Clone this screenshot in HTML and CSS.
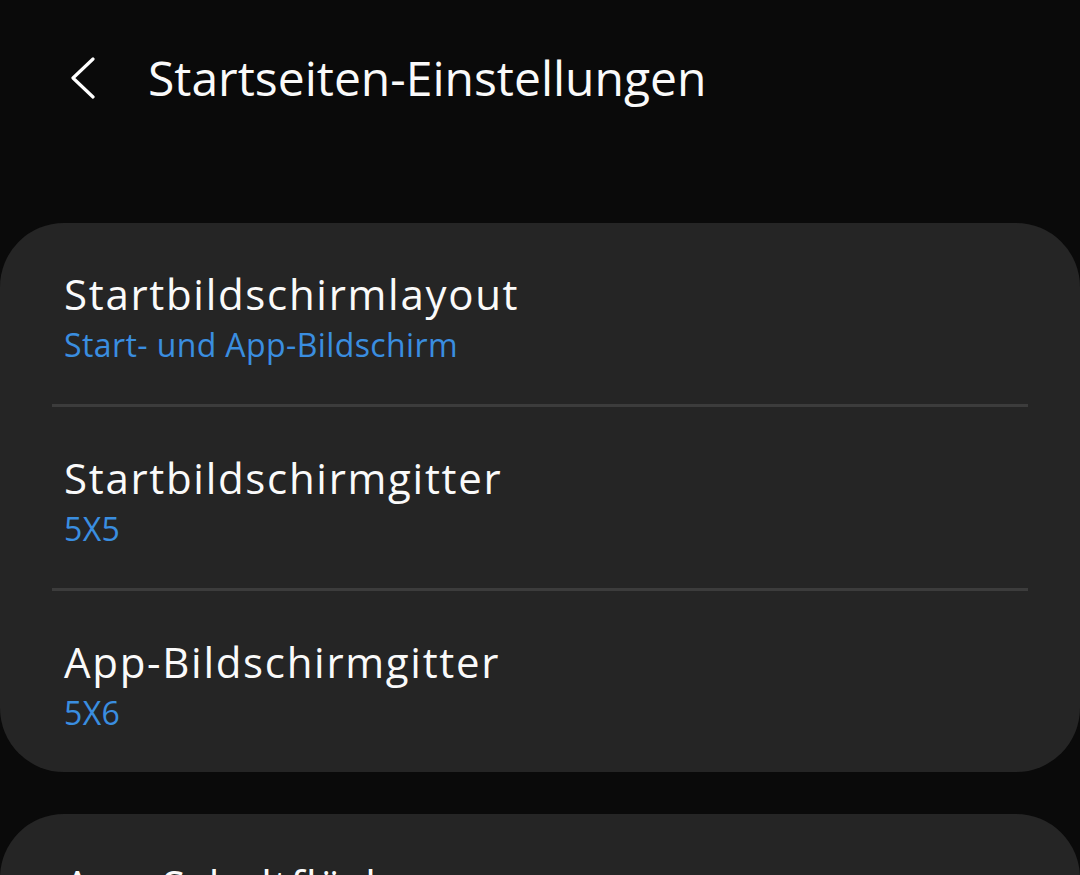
FILE: index.html
```html
<!DOCTYPE html>
<html lang="de">
<head>
<meta charset="utf-8">
<title>Startseiten-Einstellungen</title>
<link rel="stylesheet" href="styles.css">
</head>
<body>
<header class="appbar">
  <span class="back">
    <svg width="30" height="42" viewBox="0 0 30 42"><path d="M25 2 L5 21 L25 40" fill="none" stroke="#ffffff" stroke-width="3.2" stroke-linecap="round" stroke-linejoin="round"/></svg>
  </span>
  <h1 class="title">Startseiten-Einstellungen</h1>
</header>
<main class="content">
  <section class="card">
    <div class="row">
      <div class="row-title">Startbildschirmlayout</div>
      <div class="row-sub">Start- und App-Bildschirm</div>
    </div>
    <div class="divider"></div>
    <div class="row">
      <div class="row-title">Startbildschirmgitter</div>
      <div class="row-sub">5X5</div>
    </div>
    <div class="divider"></div>
    <div class="row">
      <div class="row-title">App-Bildschirmgitter</div>
      <div class="row-sub">5X6</div>
    </div>
  </section>
  <section class="card">
    <div class="row">
      <div class="row-title">App-Schaltfläche</div>
    </div>
  </section>
</main>
</body>
</html>
```

FILE: styles.css
```css
html, body {
  margin: 0;
  padding: 0;
}
body {
  background: #0a0a0a;
  font-family: "Open Sans", Roboto, sans-serif;
  color: #fafafa;
  width: 1080px;
  height: 875px;
  overflow: hidden;
}
.appbar {
  height: 155px;
  display: flex;
  align-items: center;
  margin-bottom: 68px;
}
.back {
  display: flex;
  width: 30px;
  margin-left: 68px;
  margin-right: 50px;
}
.title {
  margin: 0;
  font-weight: 400;
  font-size: 48px;
  line-height: 56px;
  letter-spacing: 0;
  color: #fafafa;
}
.content {
  display: flex;
  flex-direction: column;
  gap: 42px;
}
.card {
  background: #252525;
  border-radius: 64px;
  padding: 0 52px;
}
.row {
  height: 181px;
  box-sizing: border-box;
  padding: 45px 12px 0;
  display: flex;
  flex-direction: column;
}
.row-title {
  font-size: 42px;
  line-height: 52px;
  letter-spacing: 1.7px;
  color: #fafafa;
}
.row-sub {
  margin-top: 3px;
  font-size: 32px;
  line-height: 44px;
  letter-spacing: 0.4px;
  color: #3a8ee0;
}
.divider {
  height: 3px;
  background: #3c3c3c;
}
```
